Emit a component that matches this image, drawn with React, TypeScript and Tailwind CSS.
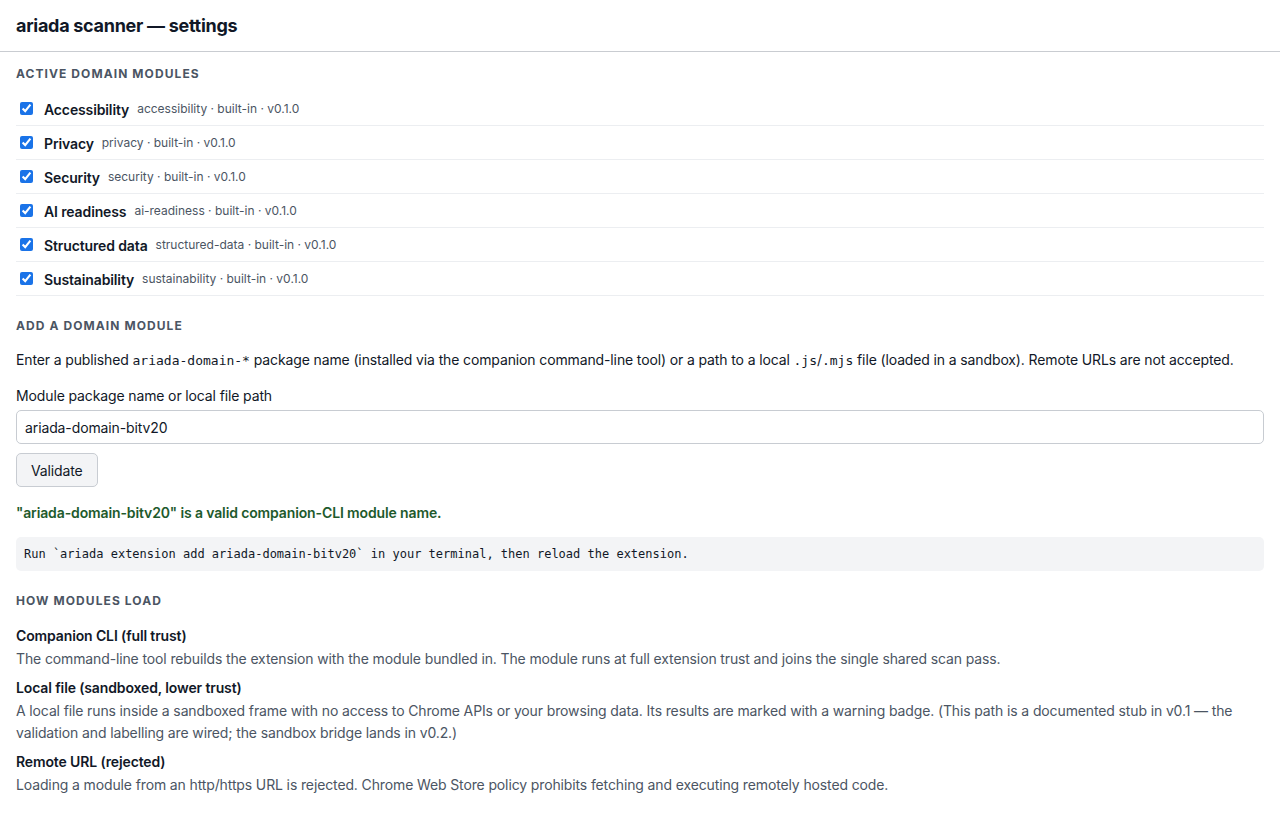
const modules = [
  { name: 'Accessibility', id: 'accessibility' },
  { name: 'Privacy', id: 'privacy' },
  { name: 'Security', id: 'security' },
  { name: 'AI readiness', id: 'ai-readiness' },
  { name: 'Structured data', id: 'structured-data' },
  { name: 'Sustainability', id: 'sustainability' },
]

const loaders = [
  {
    title: 'Companion CLI (full trust)',
    body: 'The command-line tool rebuilds the extension with the module bundled in. The module runs at full extension trust and joins the single shared scan pass.',
  },
  {
    title: 'Local file (sandboxed, lower trust)',
    body: 'A local file runs inside a sandboxed frame with no access to Chrome APIs or your browsing data. Its results are marked with a warning badge. (This path is a documented stub in v0.1 — the validation and labelling are wired; the sandbox bridge lands in v0.2.)',
  },
  {
    title: 'Remote URL (rejected)',
    body: 'Loading a module from an http/https URL is rejected. Chrome Web Store policy prohibits fetching and executing remotely hosted code.',
  },
]

function SectionTitle({ children }: { children: React.ReactNode }) {
  return (
    <h2 className="text-[12px] font-bold uppercase tracking-[0.09em] text-[#4b5563] leading-[16px]">{children}</h2>
  )
}

const mono = "font-['DejaVu_Sans_Mono',monospace] text-[13px] tracking-normal"

export default function App() {
  return (
    <div className="min-h-[826px] bg-white text-[#111827] tracking-[-0.008em] font-['Inter','Liberation_Sans',sans-serif]">
      <header className="h-[52px] px-4 flex items-center border-b border-[#c9ccd1]">
        <h1 className="text-[18px] font-bold leading-none pt-[1px] tracking-[-0.016em]">ariada scanner — settings</h1>
      </header>

      <main className="px-4">
        <section className="pt-[14px]">
          <SectionTitle>Active domain modules</SectionTitle>
          <ul className="mt-[10px]">
            {modules.map((m) => (
              <li key={m.id} className="h-[34px] flex items-center border-b border-[#eceef1] pl-[4px]">
                <input type="checkbox" defaultChecked className="w-[13px] h-[13px] accent-[#1a73e8]" />
                <span className="ml-[11px] text-[14px] font-semibold mt-[1px]">{m.name}</span>
                <span className="ml-[8px] text-[12px] text-[#4b5563] tracking-normal">
                  {m.id} · built-in · v0.1.0
                </span>
              </li>
            ))}
          </ul>
        </section>

        <section className="pt-[22px]">
          <SectionTitle>Add a domain module</SectionTitle>
          <p className="mt-[16px] text-[14px] leading-[20px]">
            Enter a published <code className={mono}>ariada-domain-*</code> package name (installed via the companion
            command-line tool) or a path to a local <code className={mono}>.js</code>/<code className={mono}>.mjs</code> file
            (loaded in a sandbox). Remote URLs are not accepted.
          </p>
          <label className="block mt-[15px] text-[14px] leading-[20px]">Module package name or local file path</label>
          <input
            defaultValue="ariada-domain-bitv20"
            className="mt-[4px] w-full h-[34px] px-[8px] text-[14px] tracking-[-0.008em] border border-[#c8ccd2] rounded-[5px] outline-none"
          />
          <button className="block mt-[9px] h-[34px] px-[14px] text-[14px] bg-[#f3f4f6] border border-[#c8ccd2] rounded-[5px]">
            Validate
          </button>
          <p className="mt-[16px] text-[14px] font-semibold text-[#1e5a2c] leading-[20px]">
            "ariada-domain-bitv20" is a valid companion-CLI module name.
          </p>
          <div className="mt-[14px] h-[34px] flex items-center px-[8px] bg-[#f3f4f6] rounded-[5px] tracking-normal font-['DejaVu_Sans_Mono',monospace] text-[12px]">
            Run `ariada extension add ariada-domain-bitv20` in your terminal, then reload the extension.
          </div>
        </section>

        <section className="pt-[22px]">
          <SectionTitle>How modules load</SectionTitle>
          <dl className="mt-[17px]">
            {loaders.map((l, i) => (
              <div key={l.title} className={i > 0 ? 'mt-[8px]' : ''}>
                <dt className="text-[14px] font-semibold leading-[20px]">{l.title}</dt>
                <dd className="mt-[2px] text-[14px] leading-[22px] text-[#4b5563]">{l.body}</dd>
              </div>
            ))}
          </dl>
        </section>
      </main>
    </div>
  )
}
